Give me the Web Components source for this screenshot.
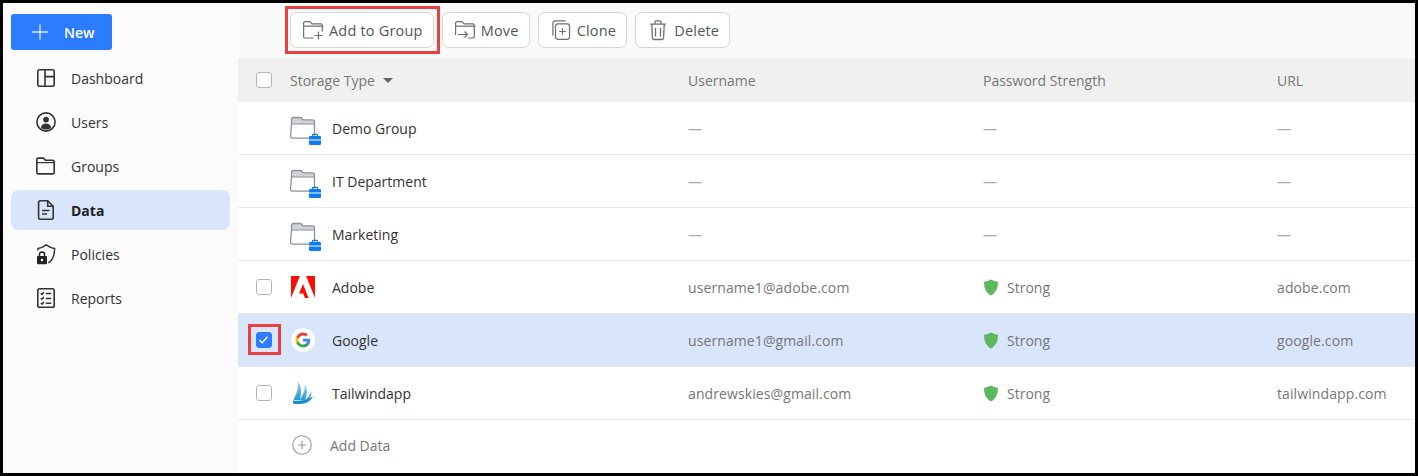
<!DOCTYPE html>
<html>
<head>
<meta charset="utf-8">
<style>
  html, body { margin: 0; padding: 0; background: #000; }
  body { font-family: "Open Sans", "Noto Sans", "Liberation Sans", sans-serif; }
</style>
</head>
<body>
<app-shell>
  <side-bar slot="side">
    <new-button>New</new-button>
    <nav-item icon="dashboard">Dashboard</nav-item>
    <nav-item icon="users">Users</nav-item>
    <nav-item icon="groups">Groups</nav-item>
    <nav-item icon="data" active>Data</nav-item>
    <nav-item icon="policies">Policies</nav-item>
    <nav-item icon="reports">Reports</nav-item>
  </side-bar>
  <tool-bar slot="top">
    <tool-button icon="add" marked>Add to Group</tool-button>
    <tool-button icon="move">Move</tool-button>
    <tool-button icon="clone">Clone</tool-button>
    <tool-button icon="delete">Delete</tool-button>
  </tool-bar>
  <table-head slot="main"></table-head>
  <data-row slot="main" logo="folder" name="Demo Group" user="—" strength="—" url="—" nocheck></data-row>
  <data-row slot="main" logo="folder" name="IT Department" user="—" strength="—" url="—" nocheck></data-row>
  <data-row slot="main" logo="folder" name="Marketing" user="—" strength="—" url="—" nocheck></data-row>
  <data-row slot="main" logo="adobe" name="Adobe" user="username1@adobe.com" strength="Strong" url="adobe.com"></data-row>
  <data-row slot="main" logo="google" name="Google" user="username1@gmail.com" strength="Strong" url="google.com" checked></data-row>
  <data-row slot="main" logo="tailwind" name="Tailwindapp" user="andrewskies@gmail.com" strength="Strong" url="tailwindapp.com"></data-row>
  <add-row slot="main">Add Data</add-row>
</app-shell>

<script>
const ICONS = {
  dashboard: `<svg width="20" height="20" viewBox="0 0 20 20" fill="none" stroke="#333" stroke-width="1.600"><rect x="1.800" y="1.800" width="16.400" height="16.400" rx="1.400"/><path d="M9 1.800v16.400M9 8.600h9.200"/></svg>`,
  users: `<svg width="20" height="20" viewBox="0 0 20 20"><circle cx="10" cy="10" r="9.100" fill="none" stroke="#333" stroke-width="1.600"/><circle cx="10" cy="7.600" r="2.900" fill="#333"/><path d="M4.800 15.400c.6-2.600 2.600-4 5.200-4s4.600 1.400 5.200 4c-1.400 1.300-3.200 2.100-5.200 2.100s-3.800-.8-5.200-2.100z" fill="#333"/></svg>`,
  groups: `<svg width="22" height="20" viewBox="0 0 22 20" fill="none" stroke="#333" stroke-width="1.600"><path d="M1.800 5V3.800c0-1 .7-1.700 1.700-1.700h4.300c.7 0 1.200.3 1.600.8l1 1.300h7.100c1 0 1.700.7 1.700 1.700v10.300c0 1-.7 1.700-1.700 1.700H3.500c-1 0-1.700-.7-1.700-1.700V5z"/><path d="M1.800 6.600h18.400" stroke-width="1.200"/></svg>`,
  data: `<svg width="18" height="22" viewBox="0 0 18 22" fill="none" stroke="#333" stroke-width="1.600"><path d="M3.300 1.800h7.400l5.500 5.500v11.200c0 1-.7 1.700-1.700 1.700H3.300c-1 0-1.700-.7-1.700-1.700V3.500c0-1 .7-1.700 1.700-1.700z"/><path d="M10.700 1.800v5.500h5.500M5 11.500h7.500M5 15h5"/></svg>`,
  policies: `<svg width="22" height="22" viewBox="0 0 22 22"><path d="M3 7.500V5.400C6.300 5 8.700 3.800 11.200 1.900c2.500 1.900 5 3.100 8.400 3.500 0 5.800-1.200 11.300-6.200 14.400" fill="none" stroke="#333" stroke-width="1.500"/><rect x="2" y="13" width="10" height="8.300" rx="1" fill="#222"/><path d="M4.500 13.300v-1.900c0-1.300 1-2.300 2.500-2.300s2.500 1 2.500 2.300v1.900" fill="none" stroke="#222" stroke-width="1.500"/><circle cx="7" cy="17" r="1.200" fill="#fff"/></svg>`,
  reports: `<svg width="20" height="22" viewBox="0 0 20 22" fill="none" stroke="#333"><rect x="1.800" y="1.800" width="16.400" height="18.400" rx="1.800" stroke-width="1.600"/><path d="M4.800 6.400l1.200 1.100 1.900-2.200M4.800 11.200l1.200 1.100 1.900-2.200M4.800 16l1.200 1.100 1.900-2.200M9.800 6.600h5.400M9.800 11.400h5.400M9.800 16.200h5.400" stroke-width="1.500"/></svg>`,
  add: `<svg width="22" height="22" viewBox="0 0 22 22" fill="none" stroke="#6e6e6e" stroke-width="1.200"><path d="M1.600 5.500V4.300c0-1 .6-1.600 1.600-1.600h4.500c.5 0 .9.2 1.200.6l1.200 1.500h8.600c1 0 1.600.6 1.600 1.600v6"/><path d="M11.500 19H3.200c-1 0-1.600-.6-1.600-1.600V5.500M1.600 7.200h19.800"/><path d="M16.500 12.500v8M12.500 16.500h8"/></svg>`,
  move: `<svg width="22" height="22" viewBox="0 0 22 22" fill="none" stroke="#6e6e6e" stroke-width="1.200"><path d="M1.600 12V4.300c0-1 .6-1.600 1.600-1.600h4.500c.5 0 .9.2 1.200.6l1.200 1.500h8.600c1 0 1.600.6 1.600 1.600v11c0 1-.6 1.600-1.600 1.600h-4.500"/><path d="M1.600 7.200h19.800"/><path d="M4 15.500h9.500M10.500 12.500l3 3-3 3"/><path d="M1.600 12v4"/></svg>`,
  clone: `<svg width="22" height="22" viewBox="0 0 22 22" fill="none" stroke="#6e6e6e" stroke-width="1.200"><path d="M15.500 1.800H5.500c-1.600 0-2.600 1-2.600 2.600v12"/><rect x="5.500" y="4.800" width="14" height="15.500" rx="2.200"/><path d="M12.500 9.300v6.500M9.200 12.500h6.600"/></svg>`,
  delete: `<svg width="22" height="22" viewBox="0 0 22 22" fill="none" stroke="#6e6e6e" stroke-width="1.300"><path d="M3 5.200h16M8 5V2.800c0-.6.4-1 1-1h4c.6 0 1 .4 1 1V5"/><path d="M4.800 5.200l.6 13.800c0 1 .6 1.500 1.500 1.500h8.200c.9 0 1.500-.5 1.500-1.500l.6-13.800M8.500 9v8.500M13.500 9v8.500"/></svg>`,
};

const LOGOS = {
  folder: `<svg width="34" height="34" viewBox="0 0 34 34" fill="none">
    <path d="M1.500 13V8.500c0-1.300.8-2 2-2h6.500c.8 0 1.300.3 1.800.8l1.400 1.600h9.300c1.300 0 2 .8 2 2V13z" fill="#cfd2d6"/>
    <path d="M1.500 13V8.500c0-1.300.8-2 2-2h6.500c.8 0 1.300.3 1.800.8l1.400 1.600h9.300c1.300 0 2 .8 2 2v14.200c0 1.300-.8 2-2 2h-20c-1.300 0-2-.8-2-2z" stroke="#8b939c" stroke-width="1.300"/>
    <path d="M1.500 13h23" stroke="#8b939c" stroke-width="1"/>
    <rect x="19" y="25" width="12" height="9" rx="1.300" fill="#0d7bf2"/>
    <path d="M22.500 25v-.8c0-.5.300-.8.800-.8h3.400c.5 0 .8.300.8.800v.8" stroke="#0d7bf2" stroke-width="1.200"/>
    <path d="M19 29h12" stroke="#fff" stroke-width="1"/>
  </svg>`,
  adobe: `<svg style="margin-left:1px" width="24" height="22" viewBox="0 0 24 22" fill="#fa0f00"><path d="M15.100 0H24v22zM8.900 0H0v22zM12 8.100L17.600 22h-3.700l-1.700-4.400H8.100z"/></svg>`,
  google: `<svg style="margin-left:1px" width="24" height="24" viewBox="0 0 25 25"><circle cx="12.500" cy="12.500" r="12.500" fill="#fff"/>
    <g transform="translate(4.700 4.700) scale(.65)">
    <path fill="#4285f4" d="M23.500 12.300c0-.8-.1-1.600-.2-2.300H12v4.500h6.500c-.3 1.500-1.100 2.700-2.400 3.600v3h3.900c2.200-2.100 3.500-5.100 3.500-8.800z"/>
    <path fill="#34a853" d="M12 24c3.200 0 6-1.100 8-2.900l-3.900-3c-1.100.7-2.500 1.200-4.100 1.200-3.100 0-5.800-2.100-6.700-5H1.300v3.100C3.300 21.300 7.300 24 12 24z"/>
    <path fill="#fbbc05" d="M5.300 14.300c-.3-.7-.4-1.500-.4-2.300s.1-1.600.4-2.300V6.600H1.300C.5 8.200 0 10 0 12s.5 3.800 1.300 5.400z"/>
    <path fill="#ea4335" d="M12 4.700c1.800 0 3.300.6 4.600 1.800l3.400-3.400C18 1.200 15.200 0 12 0 7.300 0 3.300 2.700 1.300 6.600l4 3.100c.9-2.900 3.600-5 6.700-5z"/>
    </g></svg>`,
  tailwind: `<svg width="24" height="24" viewBox="0 0 24 24"><defs><linearGradient id="sail" x1="0" y1="0" x2="0" y2="1"><stop offset="0" stop-color="#8ed4ef"/><stop offset=".6" stop-color="#4bb0dc"/><stop offset="1" stop-color="#2a9bd2"/></linearGradient></defs>
    <path fill="url(#sail)" d="M8 0C11 5 12 11 10 19L3.500 19C6.500 13 9 7 8 0z"/>
    <path fill="url(#sail)" d="M15 4C17.500 8 17.500 14 15 19L9.800 19C12.500 15 15 10 15 4z"/>
    <path fill="url(#sail)" d="M21 10C22 13 21.500 16 19 18.500L14.800 19C18 17 20 14 21 10z"/>
    <path fill="#1a8cc7" d="M3 19.500C9 20.500 17 19.500 23 15.500C21 20 16 23 10 23L3.500 23C3 22 3 20.500 3 19.500z"/></svg>`,
};

class AppShell extends HTMLElement {
  constructor() {
    super();
    this.attachShadow({ mode: "open" }).innerHTML = `
<style>
  :host {
    display: grid;
    grid-template-columns: 235px 1fr;
    width: 1418px;
    height: 476px;
    box-sizing: border-box;
    border: 3px solid #000;
    background: #fff;
    overflow: hidden;
    font-size: 14px;
    --cols: 52px 42px 356px 295px 294px 1fr;
  }
  .side { background: #fbfbfb; }
  .content { display: flex; flex-direction: column; min-width: 0; }
</style>
<div class="side"><slot name="side"></slot></div>
<div class="content"><slot name="top"></slot><slot name="main"></slot></div>`;
  }
}
customElements.define("app-shell", AppShell);

class SideBar extends HTMLElement {
  constructor() {
    super();
    this.attachShadow({ mode: "open" }).innerHTML = `
<style>
  :host { display: flex; flex-direction: column; gap: 4px; padding: 11px 8px 0; }
</style>
<slot></slot>`;
  }
}
customElements.define("side-bar", SideBar);

class NewButton extends HTMLElement {
  constructor() {
    super();
    this.attachShadow({ mode: "open" }).innerHTML = `
<style>
  :host {
    display: flex; align-items: center;
    width: 101px; height: 36px; margin-bottom: 4px;
    background: #2b7cff; color: #fff; border-radius: 3px;
    font-weight: 600; font-size: 14px;
    padding-left: 21px; box-sizing: border-box;
  }
  svg { margin-right: 16px; }
</style>
<svg width="16" height="16" viewBox="0 0 16 16" stroke="#dbe8ff" stroke-width="1.300"><path d="M8 0v16M0 8h16"/></svg><slot></slot>`;
  }
}
customElements.define("new-button", NewButton);

class NavItem extends HTMLElement {
  constructor() {
    super();
    this.attachShadow({ mode: "open" }).innerHTML = `
<style>
  :host {
    display: flex; align-items: center;
    height: 40px; border-radius: 8px; color: #333;
  }
  :host([active]) { background: #d8e5fb; font-weight: 700; color: #222; }
  .ico { width: 22px; margin-left: 24px; margin-right: 14px; display: flex; justify-content: center; }
</style>
<span class="ico">${ICONS[this.getAttribute("icon")]}</span><slot></slot>`;
  }
}
customElements.define("nav-item", NavItem);

class ToolBar extends HTMLElement {
  constructor() {
    super();
    this.attachShadow({ mode: "open" }).innerHTML = `
<style>
  :host {
    display: flex; gap: 8px; align-items: flex-start;
    height: 55px; box-sizing: border-box;
    padding: 9px 0 0 52px; background: #fafafa;
  }
</style>
<slot></slot>`;
  }
}
customElements.define("tool-bar", ToolBar);

class ToolButton extends HTMLElement {
  constructor() {
    super();
    this.attachShadow({ mode: "open" }).innerHTML = `
<style>
  :host {
    position: relative;
    display: flex; align-items: center; gap: 5px;
    height: 36px; box-sizing: border-box;
    padding: 0 10px 0 11px;
    background: #fff; border: 1px solid #d6d6d6; border-radius: 7px;
    color: #555; font-weight: 500; font-size: 14.5px; letter-spacing: .2px;
  }
  :host([marked])::after {
    content: ""; position: absolute;
    inset: -7px -7px -7px -6px;
    border: 3px solid #e8403f;
  }
  svg { display: block; }
</style>
${ICONS[this.getAttribute("icon")]}<slot></slot>`;
  }
}
customElements.define("tool-button", ToolButton);

class CheckBox extends HTMLElement {
  constructor() {
    super();
    this.attachShadow({ mode: "open" }).innerHTML = `
<style>
  :host {
    position: relative; display: block;
    width: 16px; height: 16px; box-sizing: border-box;
    border: 1.5px solid #b5b5b5; border-radius: 3px; background: #fff;
  }
  :host([checked]) { background: #2b7cff; border-color: #2b7cff; }
  :host([checked])::after {
    content: ""; position: absolute;
    inset: -9.5px -9.5px -7.5px -9.5px;
    border: 3px solid #e8403f;
  }
  svg { display: none; }
  :host([checked]) svg { display: block; }
</style>
<svg width="13" height="13" viewBox="0 0 13 13" fill="none" stroke="#fff" stroke-width="1.300"><path d="M2.500 7l2.700 2.700L10.500 3.800"/></svg>`;
  }
}
customElements.define("check-box", CheckBox);

class TableHead extends HTMLElement {
  constructor() {
    super();
    this.attachShadow({ mode: "open" }).innerHTML = `
<style>
  :host {
    display: grid; grid-template-columns: var(--cols); align-items: center;
    height: 44px; background: #f0f0f0; color: #777;
  }
  check-box { margin-left: 18px; }
  .type { grid-column: 2 / 4; display: flex; align-items: center; gap: 8px; }
  .caret { width: 0; height: 0; border: 5px solid transparent; border-top: 5px solid #666; border-bottom: 0; }
</style>
<check-box></check-box>
<div class="type">Storage Type <span class="caret"></span></div>
<div>Username</div><div>Password Strength</div><div>URL</div>`;
  }
}
customElements.define("table-head", TableHead);

class DataRow extends HTMLElement {
  constructor() {
    super();
    const strength = this.getAttribute("strength");
    const shield = strength === "Strong"
      ? `<svg width="16" height="17" viewBox="0 0 16 17"><path d="M8 .5c2.200 1.300 4.500 2 7 2.200 0 6.300-2 11-7 13.800C3 13.700 1 9 1 2.700 3.500 2.500 5.800 1.800 8 .500z" fill="#5cb85c"/></svg>`
      : "";
    const dash = strength === "—";
    this.attachShadow({ mode: "open" }).innerHTML = `
<style>
  :host {
    display: grid; grid-template-columns: var(--cols); align-items: center;
    height: 53px; box-sizing: border-box;
    border-bottom: 1px solid #e8e8e8; color: #777;
  }
  :host([checked]) { background: #d8e5fb; }
  check-box { margin-left: 18px; }
  .logo { display: flex; align-items: center; }
  .name { color: #333; }
  .val { letter-spacing: .1px; }
  .dash { color: #aaa; }
  .strength { display: flex; align-items: center; gap: 8px; }
  svg { display: block; }
</style>
<div>${this.hasAttribute("nocheck") ? "" : `<check-box ${this.hasAttribute("checked") ? "checked" : ""}></check-box>`}</div>
<div class="logo">${LOGOS[this.getAttribute("logo")]}</div>
<div class="name">${this.getAttribute("name")}</div>
<div class="val ${dash ? "dash" : ""}">${this.getAttribute("user")}</div>
<div class="strength ${dash ? "dash" : ""}">${shield}${strength}</div>
<div class="val ${dash ? "dash" : ""}">${this.getAttribute("url")}</div>`;
  }
}
customElements.define("data-row", DataRow);

class AddRow extends HTMLElement {
  constructor() {
    super();
    this.attachShadow({ mode: "open" }).innerHTML = `
<style>
  :host {
    display: flex; align-items: center; gap: 18px;
    height: 50px; padding-left: 54px; color: #777; font-weight: 500; font-size: 14px;
  }
</style>
<svg width="20" height="20" viewBox="0 0 21 21" fill="none" stroke="#999" stroke-width="1.200"><circle cx="10.500" cy="10.500" r="9.700"/><path d="M10.500 6v9M6 10.500h9"/></svg><slot></slot>`;
  }
}
customElements.define("add-row", AddRow);
</script>
</body>
</html>
